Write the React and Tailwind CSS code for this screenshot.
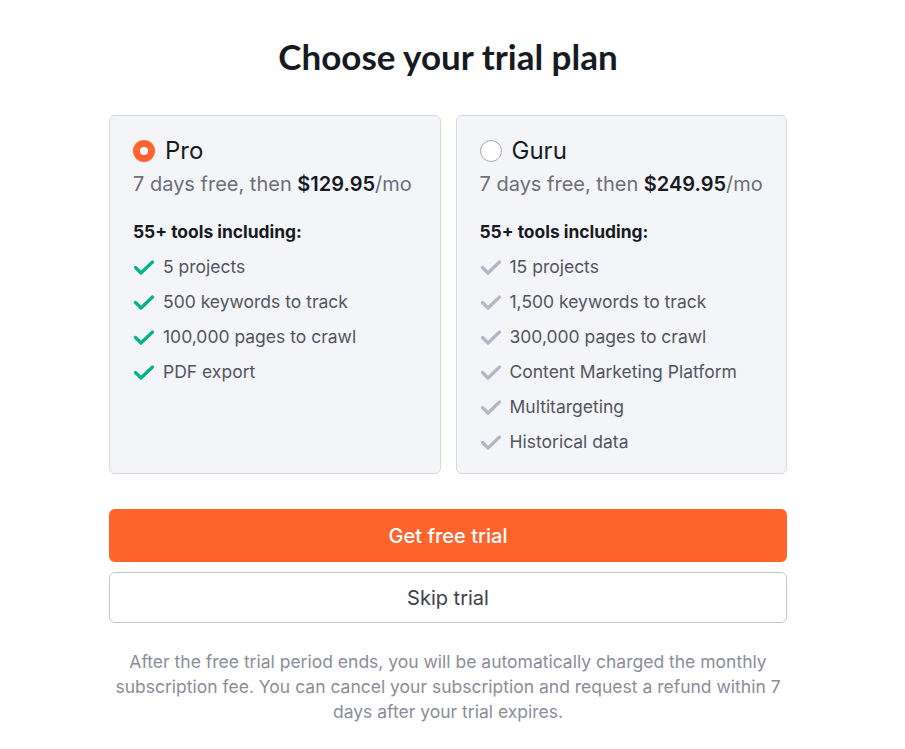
import React, { useState } from 'react'

const plans = [
    {
        id: 'pro',
        name: 'Pro',
        price: '$129.95',
        features: ['5 projects', '500 keywords to track', '100,000 pages to crawl', 'PDF export'],
    },
    {
        id: 'guru',
        name: 'Guru',
        price: '$249.95',
        features: ['15 projects', '1,500 keywords to track', '300,000 pages to crawl', 'Content Marketing Platform', 'Multitargeting', 'Historical data'],
    },
]

function Check({ active }) {
    return (
        <svg width="22" height="22" viewBox="0 0 22 22" className="shrink-0">
            <path d="M2.5 11.5l5.5 5.5L19.5 6" fill="none" stroke={active ? '#00b386' : '#b4b7c2'} strokeWidth="3.2" strokeLinecap="round" strokeLinejoin="round" />
        </svg>
    )
}

function PlanCard({ plan, selected, onSelect }) {
    return (
        <div onClick={onSelect} className="flex-1 cursor-pointer rounded-md border border-[#d6d8df] bg-[#f4f5f9] px-[23px] pt-[20px] pb-[20px]">
            <div className="flex items-center gap-[10px]">
                {selected ? (
                    <span className="flex h-[22px] w-[22px] items-center justify-center rounded-full bg-[#ff642d]">
                        <span className="h-[8px] w-[8px] rounded-full bg-white" />
                    </span>
                ) : (
                    <span className="h-[22px] w-[22px] rounded-full border border-[#a6a9b3] bg-white" />
                )}
                <span className="text-[24px] leading-[30px] text-[#171a22]">{plan.name}</span>
            </div>
            <p className="mt-[4px] text-[20px] leading-[28px] text-[#6c6e79]">
                7 days free, then <span className="font-semibold text-[#171a22]">{plan.price}</span>/mo
            </p>
            <p className="mt-[22px] text-[17.4px] font-bold leading-[24px] text-[#171a22]">55+ tools including:</p>
            <ul className="mt-[12px] flex flex-col gap-[13px]">
                {plan.features.map(f => (
                    <li key={f} className="flex items-center gap-[8px] text-[17.5px] leading-[22px] text-[#52545e]">
                        <Check active={selected} />
                        {f}
                    </li>
                ))}
            </ul>
        </div>
    )
}

export default function App() {
    const [plan, setPlan] = useState('pro')

    return (
        <div className="min-h-screen bg-white" style={{ fontFamily: 'Inter, "Noto Sans", sans-serif' }}>
            <div className="flex w-[896px] flex-col items-center pt-[32px]">
                <h1 className="text-[35px] leading-[48px] text-[#171a22]" style={{ fontFamily: 'Lato, Inter, sans-serif', fontWeight: 700 }}>
                    Choose your trial plan
                </h1>

                <div className="mt-[35px] flex w-[678px] items-stretch gap-[15px]">
                    {plans.map(p => (
                        <PlanCard key={p.id} plan={p} selected={plan === p.id} onSelect={() => setPlan(p.id)} />
                    ))}
                </div>

                <button className="mt-[35px] h-[53px] w-[678px] rounded-md bg-[#ff642d] text-[20px] font-medium text-white">
                    Get free trial
                </button>
                <button className="mt-[10px] h-[51px] w-[678px] rounded-md border border-[#c4c7cf] bg-white text-[20px] text-[#3e414a]">
                    Skip trial
                </button>

                <p className="mt-[26px] w-[678px] text-center text-[17.5px] leading-[25px] text-[#8a8d98]">
                    After the free trial period ends, you will be automatically charged the monthly subscription fee. You can cancel your subscription and request a refund within 7 days after your trial expires.
                </p>
            </div>
        </div>
    )
}
